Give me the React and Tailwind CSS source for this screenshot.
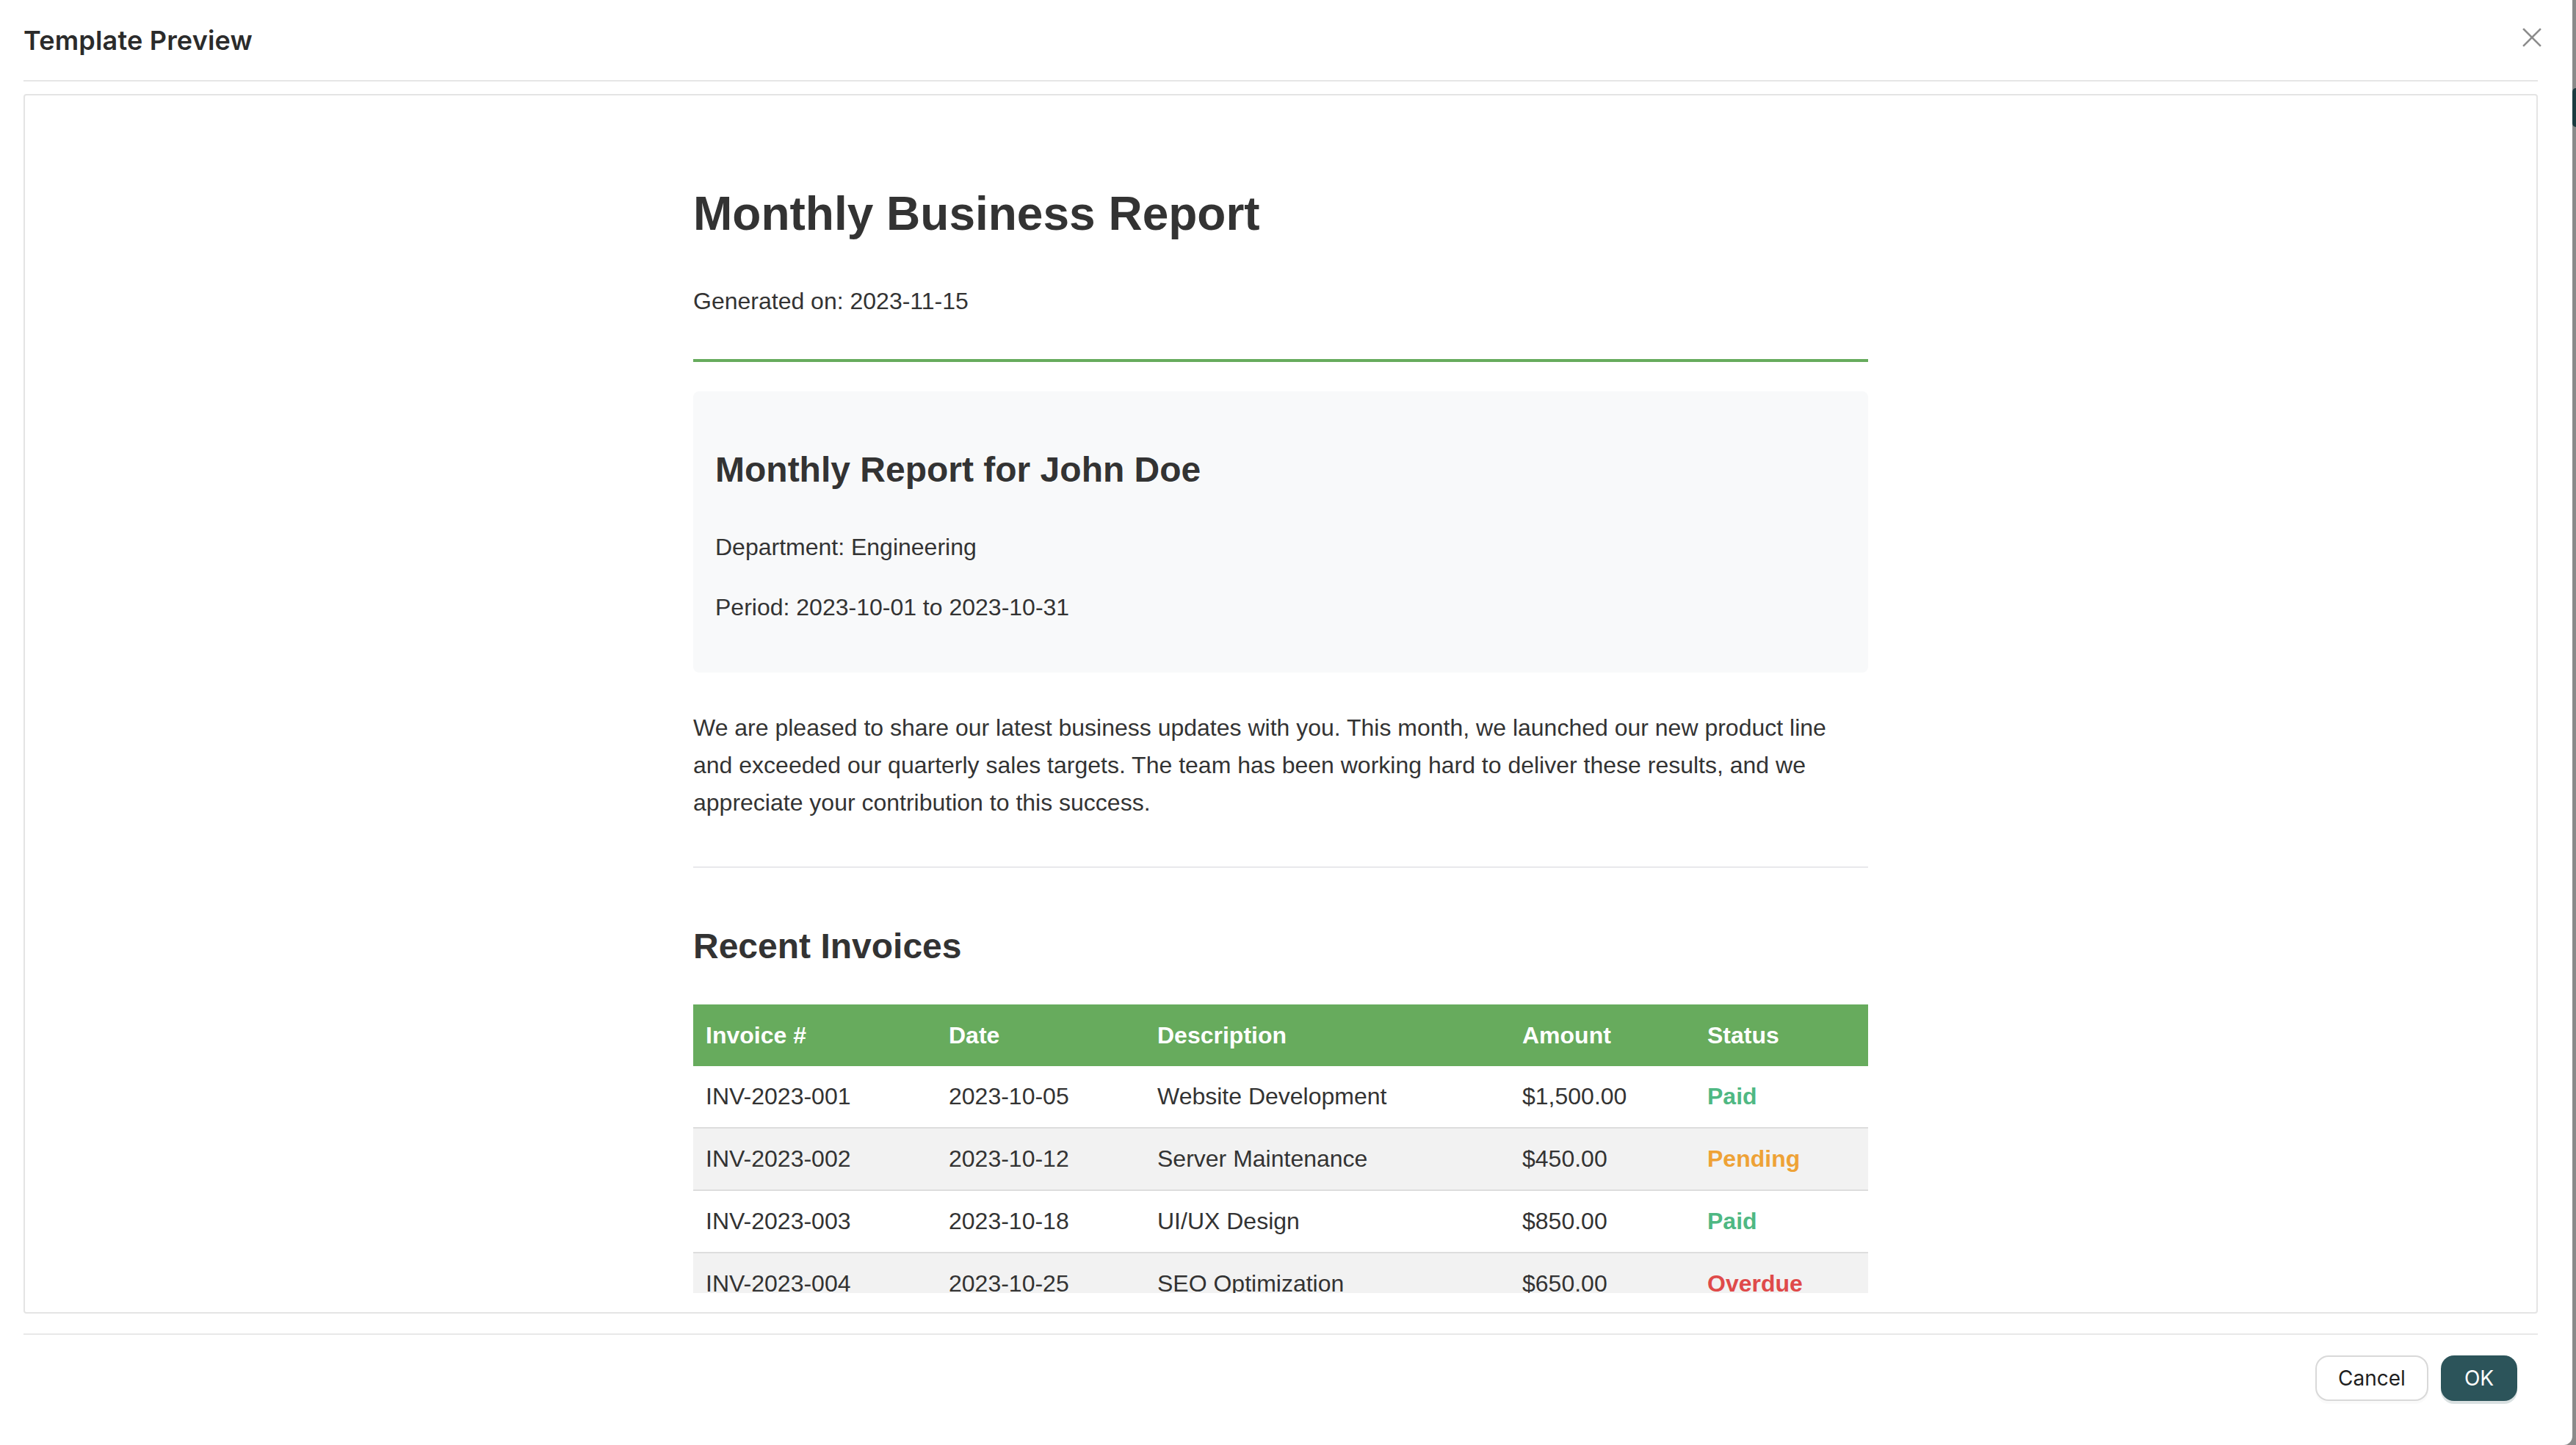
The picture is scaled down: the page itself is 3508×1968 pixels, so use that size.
import React from 'react';

const invoices = [
  { id: 'INV-2023-001', date: '2023-10-05', desc: 'Website Development', amount: '$1,500.00', status: 'Paid' },
  { id: 'INV-2023-002', date: '2023-10-12', desc: 'Server Maintenance', amount: '$450.00', status: 'Pending' },
  { id: 'INV-2023-003', date: '2023-10-18', desc: 'UI/UX Design', amount: '$850.00', status: 'Paid' },
  { id: 'INV-2023-004', date: '2023-10-25', desc: 'SEO Optimization', amount: '$650.00', status: 'Overdue' },
];

const statusColor = {
  Paid: 'text-[#4fb883]',
  Pending: 'text-[#eea236]',
  Overdue: 'text-[#df4a4a]',
};

function CloseIcon() {
  return (
    <svg width="26" height="26" viewBox="0 0 26 26" fill="none" stroke="#8c8c8c" strokeWidth="2.6" strokeLinecap="square">
      <line x1="2" y1="2" x2="24" y2="24" />
      <line x1="24" y1="2" x2="2" y2="24" />
    </svg>
  );
}

function ReportDocument() {
  return (
    <div className="mx-auto w-[1600px] pt-[97px] text-[#333] font-['Liberation_Sans',Arial,sans-serif]">
      {/* Header */}
      <div className="border-b-4 border-[#67ab5d] pb-[53px]">
        <h1 className="text-[64px] font-bold leading-[77px]">Monthly Business Report</h1>
        <p className="mt-[55px] text-[32px] leading-[51px]">Generated on: 2023-11-15</p>
      </div>

      {/* Recipient card */}
      <div className="mt-[40px] rounded-[8px] bg-[#f8f9fa] px-[30px] pt-[78px] pb-[63px]">
        <h2 className="text-[48px] font-bold leading-[58px]">Monthly Report for John Doe</h2>
        <p className="mt-[51px] text-[32px] leading-[51px]">Department: Engineering</p>
        <p className="mt-[31px] text-[32px] leading-[51px]">Period: 2023-10-01 to 2023-10-31</p>
      </div>

      <p className="mt-[50px] text-[32px] leading-[51px]">
        We are pleased to share our latest business updates with you. This month, we launched our new product line
        and exceeded our quarterly sales targets. The team has been working hard to deliver these results, and we
        appreciate your contribution to this success.
      </p>

      <div className="mt-[61px] h-[2px] bg-[#e8e8ec]" />

      <h2 className="mt-[78px] text-[48px] font-bold leading-[58px]">Recent Invoices</h2>

      <table className="mt-[50px] w-full table-fixed border-collapse text-left text-[32px]">
        <colgroup>
          <col className="w-[331px]" />
          <col className="w-[284px]" />
          <col className="w-[497px]" />
          <col className="w-[252px]" />
          <col className="w-[236px]" />
        </colgroup>
        <thead className="bg-[#67ab5d] text-white">
          <tr>
            <th className="px-[17px] py-4 font-bold leading-[52px]">Invoice #</th>
            <th className="px-[17px] py-4 font-bold leading-[52px]">Date</th>
            <th className="px-[17px] py-4 font-bold leading-[52px]">Description</th>
            <th className="px-[17px] py-4 font-bold leading-[52px]">Amount</th>
            <th className="px-[17px] py-4 font-bold leading-[52px]">Status</th>
          </tr>
        </thead>
        <tbody>
          {invoices.map((inv, i) => (
            <tr key={inv.id} className={i % 2 === 1 ? 'bg-[#f2f2f2]' : 'bg-white'}>
              <td className="border-b-2 border-[#dddddd] px-[17px] py-4 leading-[51px]">{inv.id}</td>
              <td className="border-b-2 border-[#dddddd] px-[17px] py-4 leading-[51px]">{inv.date}</td>
              <td className="border-b-2 border-[#dddddd] px-[17px] py-4 leading-[51px]">{inv.desc}</td>
              <td className="border-b-2 border-[#dddddd] px-[17px] py-4 leading-[51px]">{inv.amount}</td>
              <td className={`border-b-2 border-[#dddddd] px-[17px] py-4 font-bold leading-[51px] ${statusColor[inv.status]}`}>
                {inv.status}
              </td>
            </tr>
          ))}
        </tbody>
      </table>
      <div className="h-[200px]" />
    </div>
  );
}

export default function App() {
  return (
    <div className="flex h-[1968px] w-[3508px] overflow-hidden bg-[#8a8a8a] font-['Inter',sans-serif]">
      {/* Modal */}
      <div className="flex h-full w-[3503px] flex-col rounded-br-[12px] bg-white pl-8 pr-[47px]">
        <div className="flex h-[111px] shrink-0 items-center justify-between border-b-2 border-[#e6e6e6]">
          <h3 className="text-[36px] font-semibold tracking-[0.2px] text-[#2b2b2b]">Template Preview</h3>
          <button className="-mr-[5px] mb-[8px] flex items-center justify-center">
            <CloseIcon />
          </button>
        </div>

        <div className="mt-[17px] h-[1661px] shrink-0 rounded-[4px] border-2 border-[#e4e4e4] p-[26px]">
          <div className="h-full overflow-hidden">
            <ReportDocument />
          </div>
        </div>

        <div className="mt-[27px] flex shrink-0 justify-end gap-[17px] border-t-2 border-[#e8e8e8] pt-[28px] pr-[28px]">
          <button className="h-[62px] w-[154px] rounded-[18px] border-2 border-[#d9d9d9] bg-white text-[28px] text-[#1f1f1f] shadow-[0_4px_0_rgba(0,0,0,0.02)]">
            Cancel
          </button>
          <button className="h-[62px] w-[104px] rounded-[18px] bg-[#2c545a] text-[28px] text-white shadow-[0_4px_0_rgba(44,84,90,0.18)]">
            OK
          </button>
        </div>
      </div>

      {/* backdrop sliver */}
      <div className="flex w-[5px] flex-col">
        <div className="mt-[120px] h-[53px] rounded-l-full bg-[#1c3b40]" />
      </div>
    </div>
  );
}
